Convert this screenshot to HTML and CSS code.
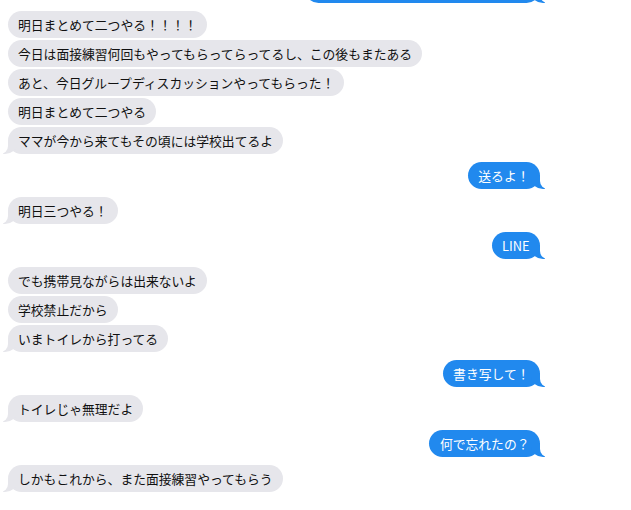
FILE: index.html
```html
<!DOCTYPE html>
<html lang="ja">
<head>
  <meta charset="UTF-8">
  <title>メッセージ</title>
  <link rel="stylesheet" href="styles.css">
</head>
<body>

  <div class="chat">
    <div class="group me">
      <div class="bubble cut tail"></div>
    </div>

    <div class="group them">
      <div class="bubble">明日まとめて二つやる！！！！</div>
      <div class="bubble">今日は面接練習何回もやってもらってらってるし、この後もまたある</div>
      <div class="bubble">あと、今日グループディスカッションやってもらった！</div>
      <div class="bubble">明日まとめて二つやる</div>
      <div class="bubble tail">ママが今から来てもその頃には学校出てるよ</div>
    </div>

    <div class="group me">
      <div class="bubble tail">送るよ！</div>
    </div>

    <div class="group them">
      <div class="bubble tail">明日三つやる！</div>
    </div>

    <div class="group me">
      <div class="bubble tail">LINE</div>
    </div>

    <div class="group them">
      <div class="bubble">でも携帯見ながらは出来ないよ</div>
      <div class="bubble">学校禁止だから</div>
      <div class="bubble tail">いまトイレから打ってる</div>
    </div>

    <div class="group me">
      <div class="bubble tail">書き写して！</div>
    </div>

    <div class="group them">
      <div class="bubble tail">トイレじゃ無理だよ</div>
    </div>

    <div class="group me">
      <div class="bubble tail">何で忘れたの？</div>
    </div>

    <div class="group them">
      <div class="bubble tail">しかもこれから、また面接練習やってもらう</div>
    </div>
  </div>

</body>
</html>
```

FILE: styles.css
```css
body {
  margin: 0;
  background: #fff;
  font-family: "Noto Sans CJK JP", "Noto Sans", sans-serif;
  overflow: hidden;
}

.chat {
  display: flex;
  flex-direction: column;
  gap: 8px;
  padding: 0 91px 0 8px;
  margin-top: -24px;
}

.group {
  display: flex;
  flex-direction: column;
  gap: 2px;
}

.group.them {
  align-items: flex-start;
}

.group.me {
  align-items: flex-end;
}

.bubble {
  position: relative;
  padding: 5px 10px;
  line-height: 17px;
  height: 17px;
  font-size: 12.8px;
  border-radius: 14px;
  white-space: nowrap;
}

.them .bubble {
  background: #e6e6eb;
  color: #111;
}

.me .bubble {
  background: #2189ee;
  color: #fff;
  padding: 5px 10.5px;
}

.bubble.cut {
  width: 214px;
}

/* tail */
.bubble.tail::before,
.bubble.tail::after {
  content: "";
  position: absolute;
  bottom: 0;
}

.them .bubble.tail::before {
  left: -5px;
  width: 14px;
  height: 14px;
  background: #e6e6eb;
  border-bottom-right-radius: 12px 10px;
}

.them .bubble.tail::after {
  left: -12px;
  width: 12px;
  height: 16px;
  background: #fff;
  border-bottom-right-radius: 8px;
}

.me .bubble.tail::before {
  right: -5px;
  width: 14px;
  height: 14px;
  background: #2189ee;
  border-bottom-left-radius: 12px 10px;
}

.me .bubble.tail::after {
  right: -12px;
  width: 12px;
  height: 16px;
  background: #fff;
  border-bottom-left-radius: 8px;
}
```
